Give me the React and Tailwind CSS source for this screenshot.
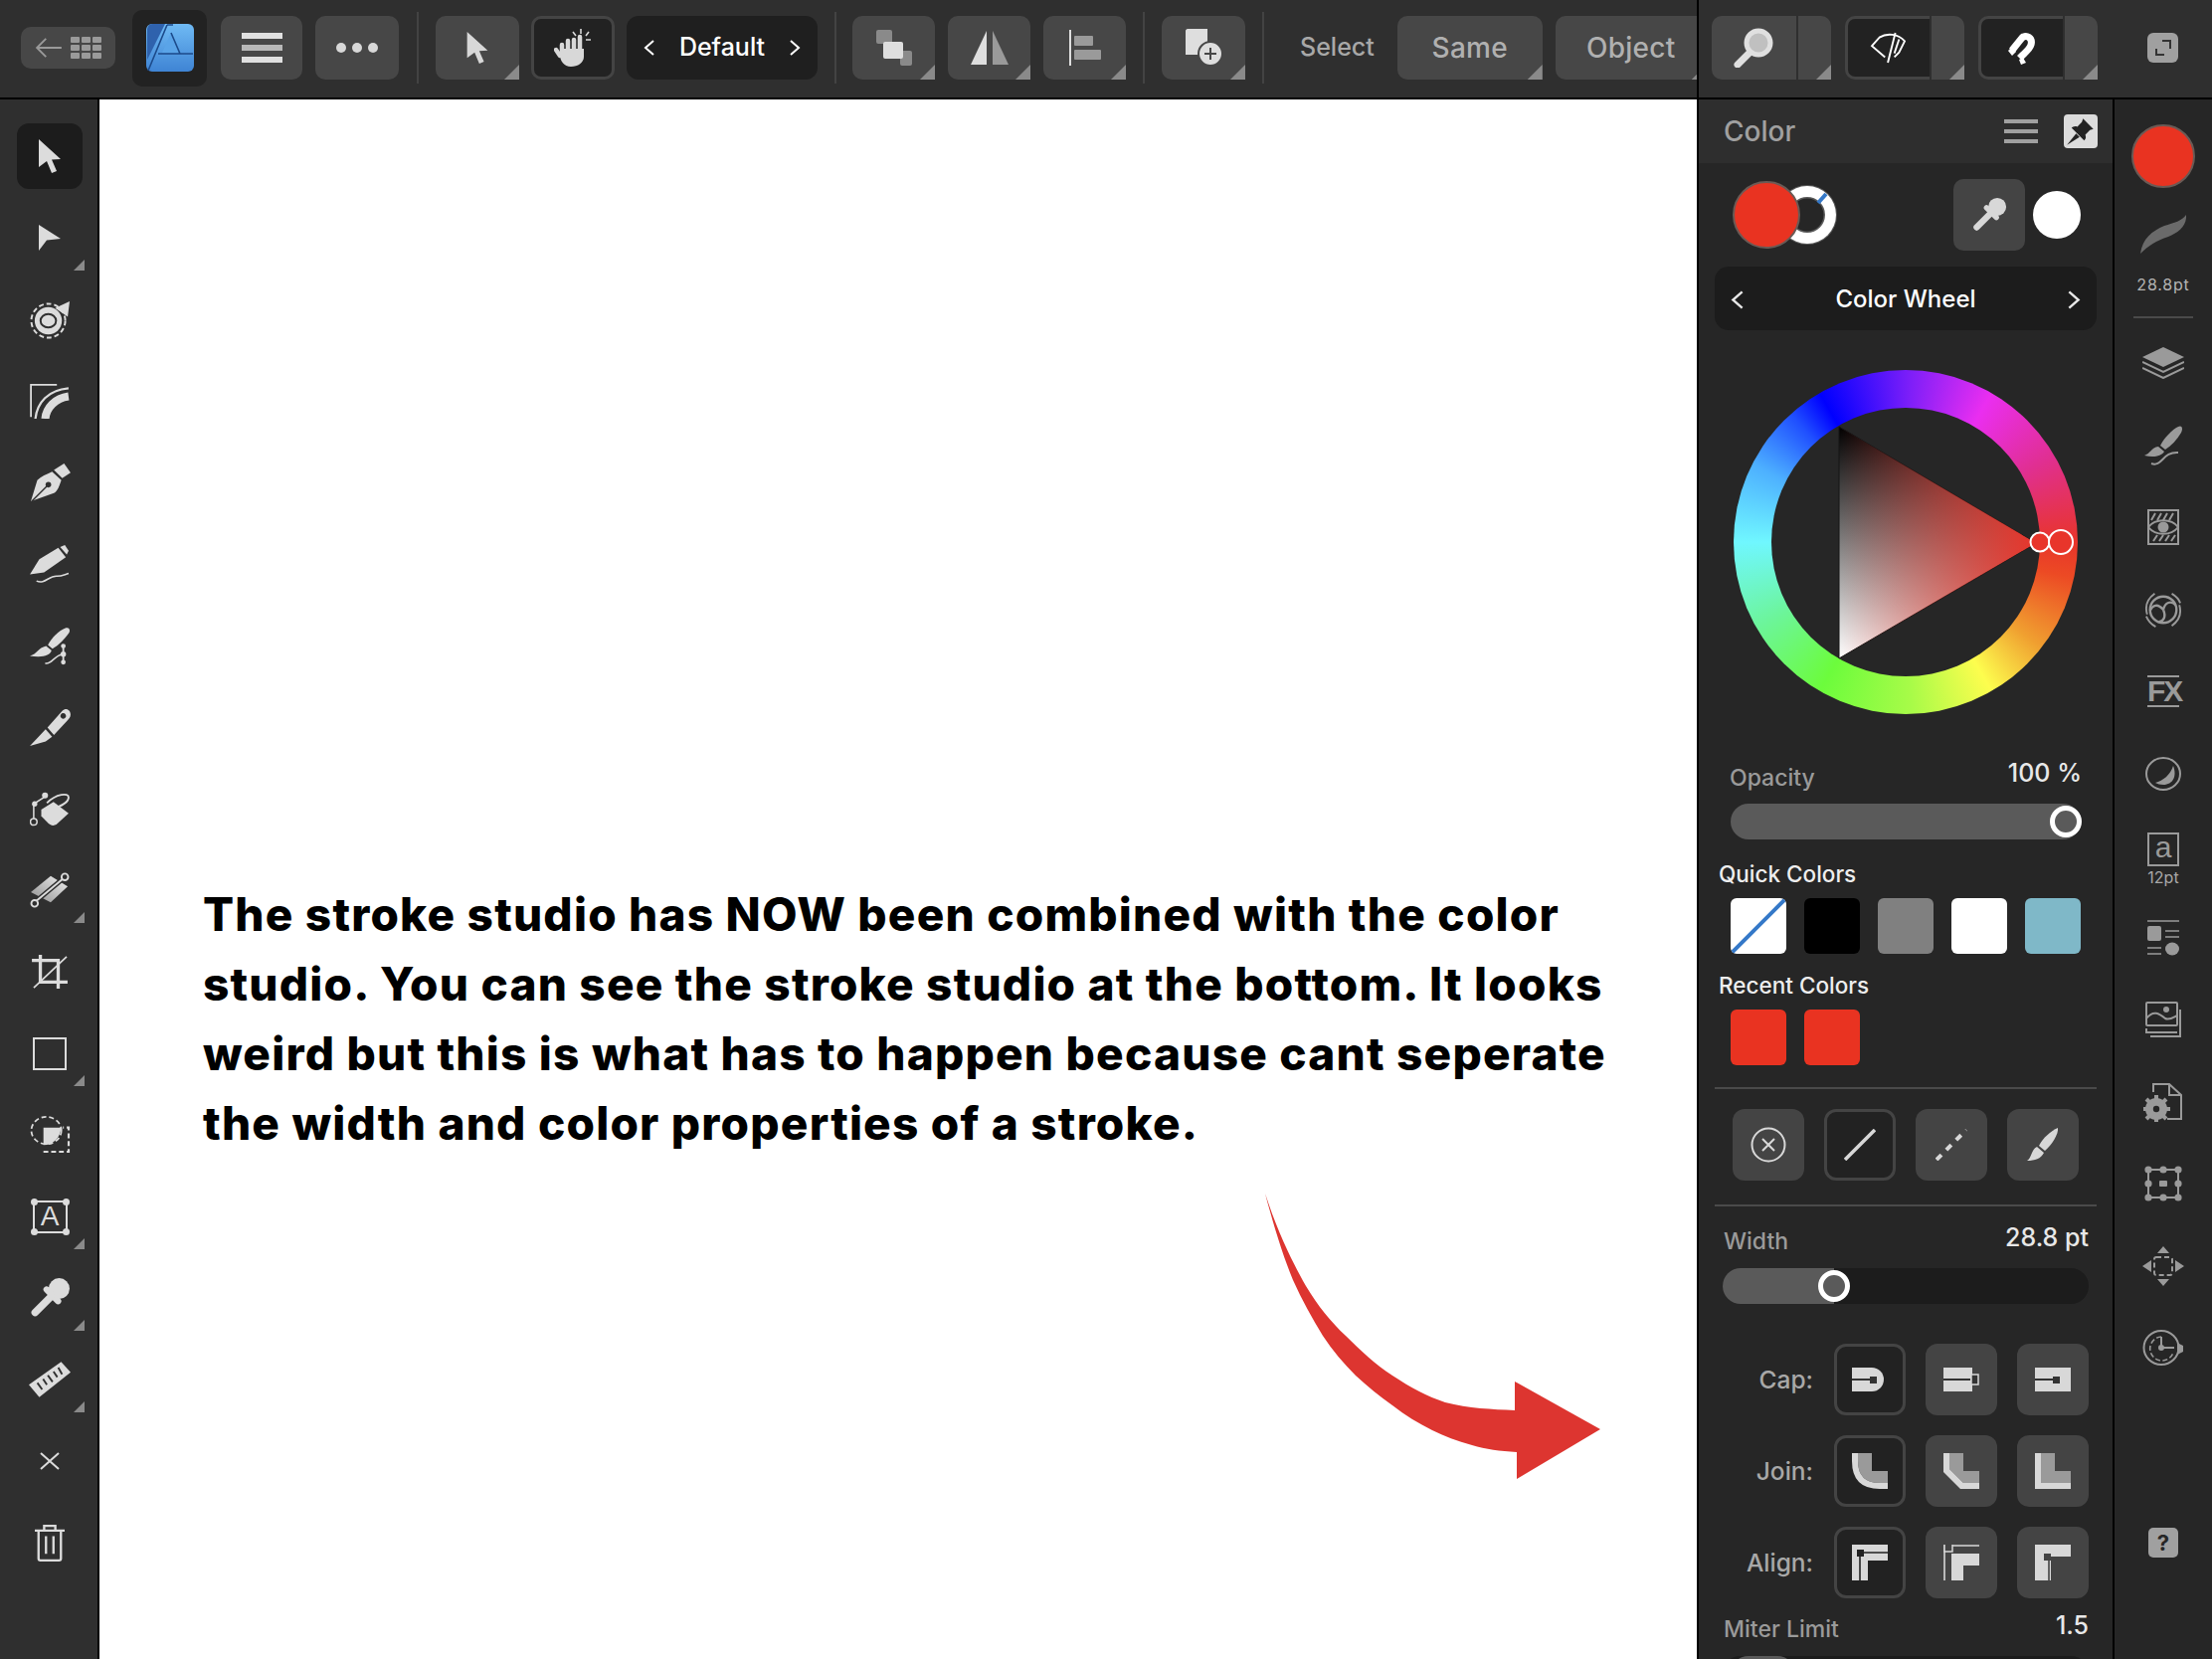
import React from "react";

const Corner = ({ size = "w-[15px] h-[15px]", className = "right-0 bottom-0" }) => (
  <span className={`absolute bg-[#8a8a8a] [clip-path:polygon(100%_0,100%_100%,0_100%)] ${size} ${className}`} />
);

const Btn = ({ className = "", corner, dark, children }) => (
  <div
    className={`relative shrink-0 h-16 flex items-center justify-center ${
      dark ? "bg-[#222222] border-[3px] border-[#444444]" : "bg-[#474747]"
    } ${corner ? "rounded-[10px] rounded-br-none" : "rounded-[10px]"} ${className}`}
  >
    {children}
    {corner && <Corner />}
  </div>
);

const Sep = ({ className = "" }) => <div className={`shrink-0 w-[2px] h-[72px] bg-[#434343] ${className}`} />;

const Split = ({ className = "", dark, children }) => (
  <div className={`flex shrink-0 gap-[2px] ${className}`}>
    <div className={`w-[85px] h-16 flex items-center justify-center rounded-l-[10px] ${dark ? "bg-[#222222] border-[3px] border-r-0 border-[#444444]" : "bg-[#474747]"}`}>
      {children}
    </div>
    <div className="relative w-[33px] h-16 bg-[#474747] rounded-r-[10px] rounded-br-none">
      <Corner />
    </div>
  </div>
);

const Arrow = ({ className = "" }) => (
  <svg viewBox="0 0 22 34" className={`fill-current ${className}`}>
    <path d="M0 0 L22 20 L13 20.5 L18 32 L13 34 L8 22 L0 28 Z" />
  </svg>
);

const Chevron = ({ dir, className = "w-3 h-4" }) => (
  <svg viewBox="0 0 12 16" className={`fill-none stroke-current stroke-2 ${className}`}>
    <path d={dir === "left" ? "M10 1 L2 8 L10 15" : "M2 1 L10 8 L2 15"} />
  </svg>
);

const Dropper = ({ className = "" }) => (
  <svg viewBox="0 0 40 40" className={`${className}`}>
    <circle cx="29" cy="11" r="10" fill="currentColor" />
    <path d="M17 12 L28 23" stroke="currentColor" strokeWidth="6" strokeLinecap="round" />
    <path d="M21 19 L6 34" stroke="currentColor" strokeWidth="7" strokeLinecap="round" />
  </svg>
);

// left tool bar icons
const icons = {
  move: <Arrow className="w-[22px] h-[34px]" />,
  node: (
    <svg viewBox="0 0 22 26" className="w-[22px] h-[26px] fill-current">
      <path d="M0 0 L22 14 L8 15.5 L0 26 Z" />
    </svg>
  ),
  contour: (
    <svg viewBox="0 0 42 40" className="w-[41px] h-[39px]">
      <circle cx="19" cy="21" r="17.5" fill="none" stroke="currentColor" strokeWidth="2" strokeDasharray="5 3" />
      <circle cx="19" cy="21" r="14" fill="currentColor" />
      <ellipse cx="19" cy="21" rx="8" ry="7" fill="none" stroke="#2f2f2f" strokeWidth="2" />
      <path d="M26 8 L41 1 L39 17 Z" fill="currentColor" />
    </svg>
  ),
  corner: (
    <svg viewBox="0 0 44 40" className="w-[40px] h-[36px] fill-none stroke-current">
      <path d="M1 38 V2 H30" strokeWidth="2" />
      <path d="M6 40 C8 22 20 8 43 6" strokeWidth="2.5" />
      <path d="M17 40 C18 28 28 17 43 15" strokeWidth="9" />
    </svg>
  ),
  pen: (
    <svg viewBox="0 0 44 42" className="w-[41px] h-[39px] fill-current">
      <path d="M26 7 L37 0 L44 10 L35 16 Z" />
      <path d="M24 9 L34 18 C32 24 30 30 26 32 L1 41 L8 18 C12 14 18 12 24 9 Z" />
      <path d="M2 41 L19 24" stroke="#2f2f2f" strokeWidth="1.5" />
      <circle cx="20" cy="23" r="3" fill="#2f2f2f" />
    </svg>
  ),
  pencil: (
    <svg viewBox="0 0 42 40" className="w-[40px] h-[38px] fill-current">
      <path d="M10 15 L30 3 L38 13 L15 29 L0 31 Z" />
      <path d="M32 2 L37 0 L41 6 L39 10 Z" />
      <path d="M7 38 C16 42 20 32 29 33 C34 33 37 31 41 30" fill="none" stroke="currentColor" strokeWidth="1.6" />
    </svg>
  ),
  vector: (
    <svg viewBox="0 0 44 42" className="w-[40px] h-[39px] fill-current">
      <path d="M20 20 C24 12 32 4 40 1 C44 0 45 4 43 7 C38 14 32 20 25 24 Z" />
      <path d="M18 21 L24 26 C22 32 14 34 0 32 C8 30 9 23 18 21 Z" />
      <path d="M17 40 C24 42 26 32 36 30" fill="none" stroke="currentColor" strokeWidth="1.6" />
      <path d="M37 20 V40" stroke="currentColor" strokeWidth="2" />
      <circle cx="37" cy="21" r="2.6" /><circle cx="37" cy="30" r="3" /><circle cx="37" cy="39" r="2.6" />
    </svg>
  ),
  knife: (
    <svg viewBox="0 0 44 42" className="w-[41px] h-[39px] fill-current">
      <path d="M0 41 L17 23 L24 31 L17 36 Z" />
      <path fillRule="evenodd" d="M19 21 L35 3 C39 -1 44 2 44 7 C44 10 42 12 40 14 L26 29 Z M36 5.5 a3 3 0 1 0 0.1 0 Z" />
    </svg>
  ),
  fill: (
    <svg viewBox="0 0 42 38" className="w-[40px] h-[36px]">
      <path d="M12 20 L25 12 L41 24 L28 36 C24 38 21 36 19 34 L12 27 Z" fill="currentColor" />
      <path d="M18 13 C28 3 41 2 41 7 C41 12 32 17 22 20" fill="none" stroke="currentColor" strokeWidth="2" />
      <path d="M4 32 V14 L15 7" fill="none" stroke="currentColor" strokeWidth="1.6" />
      <circle cx="4" cy="33" r="3.5" fill="#2f2f2f" stroke="currentColor" strokeWidth="1.6" />
      <circle cx="5" cy="14" r="2.8" fill="currentColor" />
      <circle cx="16" cy="5" r="3.2" fill="currentColor" />
    </svg>
  ),
  gradient: (
    <svg viewBox="0 0 42 40" className="w-[40px] h-[38px]">
      <defs>
        <linearGradient id="toolgrad" x1="0" y1="1" x2="1" y2="0">
          <stop offset="0" stopColor="#8f8f8f" />
          <stop offset="1" stopColor="#f0f0f0" />
        </linearGradient>
      </defs>
      <path d="M1 22 L22 5 L40 16 L22 33 Z" fill="url(#toolgrad)" />
      <path d="M5 33 L36 7" stroke="#2f2f2f" strokeWidth="5" />
      <path d="M5 33 L36 7" stroke="currentColor" strokeWidth="2" />
      <circle cx="5" cy="34" r="3.5" fill="#2f2f2f" stroke="currentColor" strokeWidth="2" />
      <circle cx="37" cy="6" r="3.5" fill="#2f2f2f" stroke="currentColor" strokeWidth="2" />
    </svg>
  ),
  crop: (
    <svg viewBox="0 0 38 36" className="w-[36px] h-[34px] fill-none stroke-current">
      <path d="M0 6 H28 V36 M9 0 V29 H38" strokeWidth="3.5" />
      <path d="M2 35 L37 2" strokeWidth="1.8" />
    </svg>
  ),
  rect: <div className="w-[34px] h-[33px] border-[2.5px] border-current" />,
  shape: (
    <svg viewBox="0 0 42 39" className="w-[41px] h-[38px]">
      <ellipse cx="17" cy="15" rx="15.5" ry="14" fill="none" stroke="currentColor" strokeWidth="1.8" strokeDasharray="5 3" />
      <path d="M14 12 H32 C32 22 24 30 14 30 Z" fill="currentColor" />
      <path d="M14 37 H40 V12 H34" fill="none" stroke="currentColor" strokeWidth="2.2" strokeDasharray="5 3" />
    </svg>
  ),
  text: (
    <div className="relative w-[35px] h-[33px] flex items-center justify-center border-2 border-current text-[28px] leading-none font-['Liberation_Sans',sans-serif]">
      A
      <span className="absolute -left-[4px] -top-[4px] w-[7px] h-[7px] rounded-full bg-current" />
      <span className="absolute -right-[4px] -top-[4px] w-[7px] h-[7px] rounded-full bg-current" />
      <span className="absolute -left-[4px] -bottom-[4px] w-[7px] h-[7px] rounded-full bg-current" />
      <span className="absolute -right-[4px] -bottom-[4px] w-[7px] h-[7px] rounded-full bg-current" />
    </div>
  ),
  dropper: <Dropper className="w-[42px] h-[42px]" />,
  ruler: (
    <svg viewBox="0 0 44 38" className="w-[42px] h-[37px] fill-current">
      <path d="M0 24 L34 0 L44 11 L11 37 Z" />
      <path d="M9 22 L14 29 M15 18 L19 24 M20 14 L25 21 M26 10 L30 16 M31 6 L35 13" stroke="#2f2f2f" strokeWidth="2" />
    </svg>
  ),
  close: (
    <svg viewBox="0 0 20 20" className="w-5 h-5 stroke-current fill-none stroke-2">
      <path d="M1 2 L19 18 M19 2 L1 18" />
    </svg>
  ),
  trash: (
    <svg viewBox="0 0 32 40" className="w-[30px] h-[40px] fill-none stroke-current">
      <path d="M0 7 H32 M10 7 V2 H22 V7 M4 7 V37 C4 38 5 39 6 39 H26 C27 39 28 38 28 37 V7 M12 13 V32 M20 13 V32" strokeWidth="2.5" />
    </svg>
  ),
};

const leftTools = [
  { id: "move", active: true },
  { id: "node", corner: true },
  { id: "contour" },
  { id: "corner" },
  { id: "pen" },
  { id: "pencil" },
  { id: "vector" },
  { id: "knife" },
  { id: "fill" },
  { id: "gradient", corner: true },
  { id: "crop" },
  { id: "rect", corner: true },
  { id: "shape" },
  { id: "text", corner: true },
  { id: "dropper", corner: true },
  { id: "ruler", corner: true },
  { id: "close" },
  { id: "trash" },
];

// right rail icons
const railIcons = [
  <svg key="layers" viewBox="0 0 42 32" className="w-[42px] h-[32px]">
    <path d="M21 0 L42 10 L21 20 L0 10 Z" fill="currentColor" />
    <path d="M0 15 L21 25 L42 15 M0 21 L21 31 L42 21" fill="none" stroke="currentColor" strokeWidth="2" />
  </svg>,
  <svg key="brush" viewBox="0 0 38 40" className="w-[38px] h-[40px] fill-current">
    <path d="M16 20 C20 12 28 4 34 1 C38 -1 39 3 37 7 C33 14 27 20 21 24 Z" />
    <path d="M14 21 L20 26 C17 31 9 32 0 30 C6 28 7 22 14 21 Z" />
    <path d="M7 38 C18 42 18 26 34 27" fill="none" stroke="currentColor" strokeWidth="2" />
  </svg>,
  <svg key="studio" viewBox="0 0 32 36" className="w-[32px] h-[36px]">
    <rect x="1" y="1" width="30" height="34" fill="none" stroke="currentColor" strokeWidth="2" />
    <path d="M4 11 L8 4 M10 11 L14 4 M16 11 L20 4 M22 11 L26 4 M6 32 L10 26 M12 32 L16 26 M18 32 L22 26 M24 32 L28 26" stroke="currentColor" strokeWidth="2" />
    <path d="M1 18 C8 9 24 9 31 18 C24 27 8 27 1 18 Z" fill="#262626" stroke="currentColor" strokeWidth="2" />
    <circle cx="16" cy="18" r="5.5" fill="currentColor" />
  </svg>,
  <svg key="aperture" viewBox="0 0 40 40" className="w-[40px] h-[38px] fill-none stroke-current stroke-2">
    <path d="M3 25 C0 15 4 8 11 3 M37 15 C40 25 36 32 29 37 M29 3 C34 6 37 10 38 13 M2 27 C4 32 8 36 12 38" />
    <circle cx="20" cy="20" r="14" strokeWidth="2.5" />
    <path d="M20 20 C14 13 9 15 6 21 M20 20 C22 12 28 10 33 15 M20 20 C23 27 21 32 15 33" strokeWidth="2.5" />
  </svg>,
  <div key="fx" className="w-[32px] border-y-2 border-current text-[30px] leading-[28px] font-black text-center tracking-[-2px] font-['Liberation_Sans',sans-serif]">
    FX
  </div>,
  <svg key="tone" viewBox="0 0 36 36" className="w-[36px] h-[36px]">
    <ellipse cx="18" cy="18" rx="17" ry="16" fill="none" stroke="currentColor" strokeWidth="2" />
    <path d="M10 27 C18 25 25 19 28 10 C32 20 28 29 18 29 C15 29 12 28 10 27 Z" fill="currentColor" />
  </svg>,
  <div key="char" className="flex flex-col items-center pt-[7px]">
    <div className="w-[32px] h-[34px] border-2 border-current flex items-center justify-center text-[30px] leading-none pb-[3px] font-['Liberation_Sans',sans-serif]">a</div>
    <span className="text-[16px] leading-[18px] mt-[2px] text-[#a8a8a8]">12pt</span>
  </div>,
  <svg key="paragraph" viewBox="0 0 32 36" className="w-[32px] h-[36px]">
    <path d="M0 1 H32 M18 11 H32 M18 17 H32 M0 28 H14 M0 34 H14" stroke="currentColor" strokeWidth="1.6" />
    <rect x="0" y="6" width="14" height="15" rx="2" fill="currentColor" />
    <ellipse cx="25" cy="29" rx="7" ry="6.5" fill="currentColor" />
  </svg>,
  <svg key="stock" viewBox="0 0 36 36" className="w-[36px] h-[36px] fill-none stroke-current stroke-2">
    <rect x="1" y="1" width="31" height="23" rx="1" />
    <path d="M1 17 C8 8 14 12 20 17 C24 19 28 16 32 14" />
    <circle cx="21" cy="8" r="3" fill="currentColor" stroke="none" />
    <path d="M1 27 V31 H32 M5 35 H35 V8" />
  </svg>,
  <svg key="settings" viewBox="0 0 40 40" className="w-[40px] h-[40px]">
    <path d="M10 10 V2 H26 L38 13 V37 H24 M26 2 V13 H38" fill="none" stroke="currentColor" strokeWidth="2" />
    <circle cx="13" cy="27" r="8" fill="none" stroke="currentColor" strokeWidth="6" />
    <path d="M13 13 V41 M-1 27 H27 M3 17 L23 37 M23 17 L3 37" stroke="currentColor" strokeWidth="4" />
    <circle cx="13" cy="27" r="3.2" fill="#262626" />
  </svg>,
  <svg key="transform" viewBox="0 0 38 36" className="w-[38px] h-[36px]">
    <rect x="4" y="4" width="30" height="28" fill="none" stroke="currentColor" strokeWidth="2" />
    {[[4, 4], [19, 4], [34, 4], [4, 18], [34, 18], [4, 32], [19, 32], [34, 32]].map(([x, y]) => (
      <circle key={`${x}-${y}`} cx={x} cy={y} r="3.6" fill="currentColor" />
    ))}
    <rect x="15" y="15" width="8" height="6" rx="1" fill="currentColor" />
  </svg>,
  <svg key="navigator" viewBox="0 0 42 40" className="w-[42px] h-[40px]">
    <rect x="12" y="11" width="18" height="18" rx="2" fill="none" stroke="currentColor" strokeWidth="2" strokeDasharray="5 3" />
    <path d="M21 0 L27 7 H15 Z M21 40 L27 33 H15 Z M0 20 L9 14 V26 Z M42 20 L33 14 V26 Z" fill="currentColor" />
  </svg>,
  <svg key="history" viewBox="0 0 42 38" className="w-[42px] h-[38px]">
    <path d="M35 14 L41 17 V23 L35 26 Z" fill="currentColor" />
    <ellipse cx="19" cy="19" rx="17.5" ry="17" fill="none" stroke="currentColor" strokeWidth="2" />
    <path d="M19 8 A12 12 0 1 0 31 24" fill="none" stroke="currentColor" strokeWidth="1.6" strokeDasharray="5 2.5" />
    <path d="M19 8 V19 H32" fill="none" stroke="currentColor" strokeWidth="2" />
    <circle cx="19" cy="19" r="3" fill="currentColor" />
  </svg>,
];

const PanelBtn = ({ active, children }) => (
  <div
    className={`w-[72px] h-[72px] shrink-0 rounded-[12px] flex items-center justify-center text-[#d8d8d8] ${
      active ? "bg-[#222222] border-[3px] border-[#444444]" : "bg-[#444444]"
    }`}
  >
    {children}
  </div>
);

const CapIcon = ({ type }) => (
  <svg viewBox="0 0 36 24" className="w-9 h-6">
    {type === "round" && <path d="M0 0 H20 A12 12 0 0 1 20 24 H0 Z" fill="currentColor" />}
    {type === "butt" && <rect width="29" height="24" fill="currentColor" />}
    {type === "square" && <rect width="36" height="24" fill="currentColor" />}
    <path d={type === "butt" ? "M0 12 H27" : "M0 12 H20"} stroke="#333333" strokeWidth="2" />
    {type === "butt" ? (
      <rect x="28" y="7" width="7" height="10" fill="#333333" stroke="currentColor" strokeWidth="1.5" />
    ) : (
      <rect x="18" y="9" width="7" height="7" fill="#333333" />
    )}
  </svg>
);

const JoinIcon = ({ band, fill }) => (
  <svg viewBox="0 0 36 36" className="w-9 h-9">
    <path d={fill} fill="#9a9a9a" />
    <path d={band} fill="currentColor" />
  </svg>
);

const AlignIcon = ({ type }) => (
  <svg viewBox="0 0 36 36" className="w-9 h-9">
    {type === "center" && (
      <>
        <path d="M0 0 H36 V16 H16 V36 H0 Z" fill="currentColor" />
        <path d="M8 36 V8 H36" fill="none" stroke="#222222" strokeWidth="1.6" />
        <rect x="5" y="5" width="7" height="7" fill="#222222" />
      </>
    )}
    {type === "outside" && (
      <>
        <path d="M6 36 V6 H36 V18 H18 V36 Z" fill="currentColor" transform="translate(2 3)" />
        <path d="M1 36 V1 H36" fill="none" stroke="currentColor" strokeWidth="1.6" />
        <rect x="1" y="-1" width="8" height="8" fill="#444444" stroke="currentColor" strokeWidth="1.5" />
      </>
    )}
    {type === "inside" && (
      <>
        <path d="M0 0 H36 V12 H16 V36 H0 Z" fill="currentColor" />
        <path d="M14 36 V14 H36" fill="none" stroke="#444444" strokeWidth="1.6" />
        <rect x="9" y="9" width="7" height="7" fill="#444444" />
      </>
    )}
  </svg>
);

const StrokeRow = ({ label, children }) => (
  <div className="flex items-center">
    <span className="w-[115px] text-right text-[24.5px] font-medium text-[#a8a8a8]">{label}</span>
    <div className="ml-[21px] flex gap-5">{children}</div>
  </div>
);

const ValueRow = ({ label, value, className = "" }) => (
  <div className={`flex justify-between items-start ${className}`}>
    <span className="leading-[30px] text-[23px] font-medium text-[#9a9a9a]">{label}</span>
    <span className="leading-[30px] text-[25px] font-medium text-[#e8e8e8]">{value}</span>
  </div>
);

const Swatch = ({ className = "", children }) => (
  <div className={`relative w-14 h-14 rounded-[6px] overflow-hidden ${className}`}>{children}</div>
);

const App = () => {
  return (
    <div className="w-[2224px] h-[1668px] overflow-hidden flex flex-col bg-black font-['Inter',sans-serif] select-none">
      {/* top bar */}
      <header className="flex h-[100px] shrink-0 border-b-2 border-black">
        <div className="w-[1706px] shrink-0 overflow-hidden flex items-center pb-[2px] pl-[21px] bg-[#2f2f2f] text-[#d8d8d8]">
          <div className="shrink-0 w-[95px] h-[42px] rounded-[10px] bg-[#474747] flex items-center justify-center gap-[8px] text-[#9a9a9a]">
            <svg viewBox="0 0 30 24" className="w-[28px] h-[22px] fill-none stroke-current stroke-2">
              <path d="M12 2 L2 12 L12 22 M2 12 H29" />
            </svg>
            <div className="grid grid-cols-3 gap-[2px]">
              {Array.from({ length: 9 }).map((_, i) => (
                <span key={i} className="w-[9px] h-[6px] rounded-[1px] bg-[#9a9a9a]" />
              ))}
            </div>
          </div>
          <div className="shrink-0 ml-[17px] w-[75px] h-[77px] rounded-[10px] bg-[#222222] flex items-center justify-center">
            <svg viewBox="0 0 48 48" className="w-12 h-12">
              <defs>
                <linearGradient id="appblue" x1="0" y1="0" x2="0" y2="1">
                  <stop offset="0" stopColor="#6fbaf4" />
                  <stop offset="1" stopColor="#3f84d4" />
                </linearGradient>
              </defs>
              <rect width="48" height="48" rx="6" fill="url(#appblue)" />
              <path d="M6 0 H19 L1 36 V6 C1 3 3 0 6 0 Z" fill="#2f62ad" />
              <path d="M25 9 L34 29 H16 Z" fill="#5aa4e8" />
              <path d="M2 47 L21 1 M21 1 H27 M25 9 L34 30 M12 30 H47" fill="none" stroke="#1c4a8a" strokeWidth="1.6" />
            </svg>
          </div>
          <Btn className="ml-[14px] w-[82px]">
            <div className="flex flex-col gap-[6px]">
              <span className="block w-[41px] h-[6px] bg-[#e0e0e0]" />
              <span className="block w-[41px] h-[6px] bg-[#b8b8b8]" />
              <span className="block w-[41px] h-[6px] bg-[#e0e0e0]" />
            </div>
          </Btn>
          <Btn className="ml-[13px] w-[84px]">
            <div className="flex gap-[6px]">
              <span className="w-[10px] h-[10px] rounded-full bg-[#d8d8d8]" />
              <span className="w-[10px] h-[10px] rounded-full bg-[#d8d8d8]" />
              <span className="w-[10px] h-[10px] rounded-full bg-[#d8d8d8]" />
            </div>
          </Btn>
          <Sep className="ml-[18px]" />
          <Btn corner className="ml-[17px] w-[84px]">
            <Arrow className="w-[22px] h-[32px]" />
          </Btn>
          <Btn dark className="ml-[12px] w-[84px]">
            <svg viewBox="0 0 38 38" className="w-[38px] h-[38px]">
              <path d="M8 16 V24 M14 12 V24 M20 11 V24" stroke="currentColor" strokeWidth="4.5" strokeLinecap="round" />
              <path d="M26 8 V22 M2 21 L6 27" stroke="currentColor" strokeWidth="4.5" strokeLinecap="round" />
              <path d="M6 20 H30 V28 C30 34 24 38 17 38 C10 38 6 32 6 26 Z" fill="currentColor" />
              <path d="M27 0 V5 M19 3 L22 7 M35 3 L32 7 M37 11 H32" stroke="currentColor" strokeWidth="1.6" />
            </svg>
          </Btn>
          <div className="shrink-0 ml-[12px] w-[192px] h-16 rounded-[12px] bg-[#1f1f1f] flex items-center justify-between px-[17px] text-white">
            <Chevron dir="left" />
            <span className="text-[25px] font-medium">Default</span>
            <Chevron dir="right" />
          </div>
          <Sep className="ml-[17px]" />
          <Btn corner className="ml-[16px] w-[83px]">
            <svg viewBox="0 0 36 36" className="w-9 h-9">
              <rect x="0" y="0" width="16" height="14" rx="2" fill="#8a8a8a" />
              <rect x="24" y="21" width="12" height="15" rx="2" fill="#8a8a8a" />
              <rect x="7" y="12" width="20" height="17" rx="2" fill="#dedede" />
            </svg>
          </Btn>
          <Btn corner className="ml-[13px] w-[83px]">
            <svg viewBox="0 0 38 34" className="w-[38px] h-[34px]">
              <path d="M0 34 L16 0 V34 Z" fill="#dedede" />
              <path d="M38 34 L22 0 V34 Z" fill="#9a9a9a" />
            </svg>
          </Btn>
          <Btn corner className="ml-[13px] w-[83px]">
            <svg viewBox="0 0 32 36" className="w-8 h-9">
              <rect x="0" y="0" width="2" height="36" fill="#dedede" />
              <rect x="5" y="6" width="19" height="10" rx="1" fill="#9a9a9a" />
              <rect x="5" y="20" width="27" height="10" rx="1" fill="#9a9a9a" />
            </svg>
          </Btn>
          <Sep className="ml-[17px]" />
          <Btn corner className="ml-[17px] w-[84px]">
            <svg viewBox="0 0 40 38" className="w-[40px] h-[38px]">
              <path d="M2 2 C2 1 3 0 4 0 H24 V18 H2 Z" fill="#dedede" />
              <path d="M2 18 H20 V26 H2 Z" fill="#dedede" />
              <circle cx="27" cy="25" r="12" fill="#dedede" stroke="#474747" strokeWidth="2" />
              <path d="M27 19 V31 M21 25 H33" stroke="#474747" strokeWidth="2" />
            </svg>
          </Btn>
          <Sep className="ml-[17px]" />
          <span className="ml-[36px] shrink-0 text-[25px] font-medium text-[#a8a8a8]">Select</span>
          <Btn corner className="ml-[23px] w-[146px] text-[#b0b0b0] text-[28px] tracking-[0.3px] font-medium">
            Same
          </Btn>
          <Btn corner className="ml-[13px] w-[152px] text-[#b0b0b0] text-[28px] tracking-[0.3px] font-medium">
            Object
          </Btn>
        </div>
        <div className="flex-1 flex items-center pb-[2px] border-l-2 border-black bg-[#2f2f2f] pl-[13px] text-[#d8d8d8]">
          <Split>
            <svg viewBox="0 0 42 40" className="w-[42px] h-[40px]">
              <circle cx="25" cy="15" r="12" fill="#c0c0c0" stroke="#e0e0e0" strokeWidth="5" />
              <path d="M16 25 L4 37" stroke="#e0e0e0" strokeWidth="7" strokeLinecap="round" />
            </svg>
          </Split>
          <Split dark className="ml-[14px]">
            <svg viewBox="0 0 40 34" className="w-[40px] h-[32px] fill-none stroke-white stroke-2">
              <path d="M16 27 L2 15 L10 6 C18 1 30 2 37 10 L31 22 L26 27" />
              <path d="M19 33 L27 1" />
              <path d="M31 8 L26 23" />
            </svg>
          </Split>
          <Split dark className="ml-[14px]">
            <svg viewBox="0 0 34 34" className="w-[34px] h-[34px]">
              <path d="M9 17 L17 7 C21 3 28 7 26 14 C25 18 20 22 17 25" fill="none" stroke="white" strokeWidth="7" strokeLinecap="square" />
              <path d="M3 20 L7 16 L11 21 L7 25 Z M14 29 L18 27 L21 32 L16 34 Z" fill="white" />
            </svg>
          </Split>
          <div className="ml-[50px] w-[31px] h-[30px] rounded-[6px] bg-[#a0a0a0] flex items-center justify-center">
            <svg viewBox="0 0 20 20" className="w-5 h-5 fill-none stroke-[#333333] stroke-2">
              <path d="M9 3 H17 V11 M3 11 V17 H11" />
            </svg>
          </div>
        </div>
      </header>

      <main className="flex-1 flex min-h-0">
        {/* left tools */}
        <aside className="w-[100px] shrink-0 border-r-2 border-black bg-[#2f2f2f] text-[#dcdcdc] pt-6 pl-[17px] flex flex-col gap-4">
          {leftTools.map((t) => (
            <div
              key={t.id}
              className={`relative shrink-0 w-[66px] h-[66px] flex items-center justify-center rounded-[12px] ${t.active ? "bg-[#1c1c1c]" : ""}`}
            >
              {icons[t.id]}
              {t.corner && <Corner size="w-[11px] h-[11px]" className="right-[-2px] bottom-0" />}
            </div>
          ))}
        </aside>

        {/* canvas */}
        <section className="flex-1 bg-white overflow-hidden pl-[104px] pt-[784px] text-black">
          <div className="text-[46px] leading-[70px] font-extrabold tracking-[1.2px] whitespace-nowrap font-['Inter',sans-serif]">
            <div>The stroke studio has NOW been combined with the color</div>
            <div>studio. You can see the stroke studio at the bottom. It looks</div>
            <div>weird but this is what has to happen because cant seperate</div>
            <div>the width and color properties of a stroke.</div>
          </div>
          <svg viewBox="0 0 400 320" className="block w-[400px] h-[320px] mt-[16px] ml-[1036px]">
            <path
              d="M32 20 C45 60 60 90 73 113 C85 133 98 149 113 163 C128 178 143 192 160 203 C178 215 195 224 213 230 C237 236 260 237 283 238 L283 209 L369 257 L285 307 L285 280 C268 279 254 277 240 273 C225 269 212 264 200 258 C186 251 173 243 160 233 C147 224 135 214 123 203 C111 191 100 178 90 163 C79 145 69 127 60 107 C50 83 40 50 32 20 Z"
              fill="#dd3530"
            />
          </svg>
        </section>

        {/* color studio */}
        <section className="w-[418px] shrink-0 border-l-2 border-black bg-[#262626] overflow-hidden flex flex-col">
          <div className="h-16 shrink-0 bg-[#2e2e2e] flex items-center justify-between pl-[25px] pr-[15px]">
            <span className="text-[28px] font-medium text-[#a0a0a0]">Color</span>
            <div className="flex items-center gap-[26px]">
              <div className="flex flex-col gap-[6px]">
                <span className="block w-[34px] h-[4px] bg-[#a0a0a0]" />
                <span className="block w-[34px] h-[4px] bg-[#a0a0a0]" />
                <span className="block w-[34px] h-[4px] bg-[#a0a0a0]" />
              </div>
              <div className="w-[34px] h-[34px] rounded-[4px] bg-[#dcdcdc] flex items-center justify-center">
                <svg viewBox="0 0 26 26" className="w-[30px] h-[30px] fill-[#222222]">
                  <path d="M15 2 L24 11 L21 12 L17 16 C18 19 17 20 16 21 L5 10 C6 9 8 8 10 9 L14 5 Z" />
                  <path d="M9 15 L12 18 L1 25 Z" />
                </svg>
              </div>
            </div>
          </div>

          <div className="mt-4 h-[72px] shrink-0 flex items-center pl-[34px] pr-[32px]">
            <div className="relative z-10 w-[68px] h-[68px] rounded-full bg-[#e93321] border-2 border-[#6b5a55]" />
            <svg viewBox="0 0 62 62" className="w-[62px] h-[62px] -ml-[24px]">
              <circle cx="31" cy="31" r="30" fill="#5a5a5a" />
              <circle cx="31" cy="31" r="29" fill="#ffffff" />
              <circle cx="31" cy="31" r="18" fill="#5a5a5a" />
              <circle cx="31" cy="31" r="16.5" fill="#262626" />
              <path d="M42 19 L50 10" stroke="#3478c8" strokeWidth="4" />
            </svg>
            <div className="ml-auto w-[72px] h-[72px] rounded-[10px] bg-[#444444] flex items-center justify-center text-[#d8d8d8]">
              <Dropper className="w-[36px] h-[36px]" />
            </div>
            <div className="ml-2 w-12 h-12 rounded-full bg-white" />
          </div>

          <div className="mt-4 mx-4 h-16 shrink-0 rounded-[14px] bg-[#1c1c1c] flex items-center justify-between px-[16px] pt-[2px] text-[#e8e8e8]">
            <Chevron dir="left" className="w-[14px] h-[19px]" />
            <span className="text-[24px] font-medium text-white">Color Wheel</span>
            <Chevron dir="right" className="w-[14px] h-[19px]" />
          </div>

          <div className="relative mt-10 mx-auto shrink-0 w-[346px] h-[346px] rounded-full flex items-center justify-center bg-[conic-gradient(from_90deg,#e8352b_0deg,#ec4a24_12deg,#f0a030_38deg,#fdfd4e_60deg,#a8fb48_88deg,#6cfc3c_120deg,#6cf59a_150deg,#70f7ff_180deg,#4db0ff_207deg,#2050ff_228deg,#0000ff_240deg,#7f1ff8_272deg,#ea2ef0_300deg,#e02f90_330deg,#e8352b_360deg)]">
            <div className="w-[270px] h-[270px] rounded-full bg-[#262626]" />
            <svg viewBox="0 0 346 346" className="absolute inset-0 w-[346px] h-[346px]">
              <defs>
                <linearGradient id="triBase" x1="0" y1="57" x2="0" y2="290" gradientUnits="userSpaceOnUse">
                  <stop offset="0" stopColor="#000000" />
                  <stop offset="1" stopColor="#ffffff" />
                </linearGradient>
                <linearGradient id="triHue" x1="106" y1="0" x2="304" y2="0" gradientUnits="userSpaceOnUse">
                  <stop offset="0" stopColor="#e8352b" stopOpacity="0" />
                  <stop offset="1" stopColor="#e8352b" stopOpacity="1" />
                </linearGradient>
              </defs>
              <path d="M106 57 L106 290 L304 174 Z" fill="url(#triBase)" stroke="#151515" strokeWidth="1" />
              <path d="M106 57 L106 290 L304 174 Z" fill="url(#triHue)" />
              <circle cx="308" cy="173" r="9.5" fill="#e8352b" stroke="#ffffff" strokeWidth="2" />
              <circle cx="329" cy="173" r="12" fill="#e8352b" stroke="#ffffff" strokeWidth="2" />
            </svg>
          </div>

          <ValueRow label="Opacity" value="100 %" className="mt-[44px] ml-[31px] mr-[31px] h-[35px] shrink-0 [&>span:first-child]:mt-[5px]" />
          <div className="relative mt-[11px] ml-8 w-[352px] h-9 shrink-0 rounded-full bg-[#5a5a5a]">
            <div className="absolute -right-[1px] top-[2px] w-8 h-8 rounded-full bg-[#5a5a5a] border-[5px] border-white" />
          </div>

          <div className="mt-5 ml-[20px] leading-[30px] text-[22.5px] font-medium text-[#eeeeee]">Quick Colors</div>
          <div className="mt-[9px] ml-8 flex gap-[18px] shrink-0">
            <Swatch className="bg-white">
              <svg viewBox="0 0 56 56" className="w-14 h-14">
                <path d="M0 56 L56 0" stroke="#3478c8" strokeWidth="4" />
              </svg>
            </Swatch>
            <Swatch className="bg-black" />
            <Swatch className="bg-[#808080]" />
            <Swatch className="bg-white" />
            <Swatch className="bg-[#7fb8c8]" />
          </div>
          <div className="mt-[17px] ml-[20px] leading-[30px] text-[22.5px] font-medium text-[#eeeeee]">Recent Colors</div>
          <div className="mt-[9px] ml-8 flex gap-[18px] shrink-0">
            <Swatch className="bg-[#e93321]" />
            <Swatch className="bg-[#e93321]" />
          </div>
          <div className="mt-[22px] mx-4 h-[2px] shrink-0 bg-[#4a4a4a]" />

          <div className="mt-5 ml-[34px] flex gap-5 shrink-0">
            <PanelBtn>
              <svg viewBox="0 0 36 36" className="w-9 h-9 fill-none stroke-current stroke-2">
                <circle cx="18" cy="18" r="16.5" />
                <path d="M12 12 L24 24 M24 12 L12 24" />
              </svg>
            </PanelBtn>
            <PanelBtn active>
              <svg viewBox="0 0 32 32" className="w-8 h-8 fill-none stroke-current stroke-[3.5]">
                <path d="M1 31 L31 1" />
              </svg>
            </PanelBtn>
            <PanelBtn>
              <svg viewBox="0 0 32 32" className="w-8 h-8 fill-none stroke-current stroke-[4]">
                <path d="M1 31 L31 1" strokeDasharray="7 7" />
              </svg>
            </PanelBtn>
            <PanelBtn>
              <svg viewBox="0 0 32 34" className="w-8 h-[34px] fill-current">
                <path d="M12 18 C16 10 24 3 31 0 C32 6 25 17 18 23 Z" />
                <path d="M10 19 L17 25 C14 31 8 33 0 33 C5 30 4 22 10 19 Z" />
              </svg>
            </PanelBtn>
          </div>
          <div className="mt-6 mx-4 h-[2px] shrink-0 bg-[#4a4a4a]" />

          <ValueRow label="Width" value="28.8 pt" className="mt-4 ml-[25px] mr-6 h-[34px] shrink-0 [&>span:first-child]:mt-[4px]" />
          <div className="relative mt-3 ml-6 w-[368px] h-9 shrink-0 rounded-full bg-[#1c1c1c]">
            <div className="h-9 w-[112px] rounded-l-full bg-[#5a5a5a]" />
            <div className="absolute left-[96px] top-[2px] w-8 h-8 rounded-full bg-[#5a5a5a] border-[5px] border-white" />
          </div>

          <div className="mt-10 flex flex-col gap-5 shrink-0">
            <StrokeRow label="Cap:">
              <PanelBtn active><CapIcon type="round" /></PanelBtn>
              <PanelBtn><CapIcon type="butt" /></PanelBtn>
              <PanelBtn><CapIcon type="square" /></PanelBtn>
            </StrokeRow>
            <StrokeRow label="Join:">
              <PanelBtn active>
                <JoinIcon fill="M6 0 H20 V18 H36 V30 H28 Q6 30 6 8 Z" band="M0 0 H6 V8 Q6 30 28 30 H36 V36 H28 Q0 36 0 8 Z" />
              </PanelBtn>
              <PanelBtn>
                <JoinIcon fill="M6 0 H20 V18 H36 V30 H20 L6 16 Z" band="M0 0 H6 V16 L20 30 H36 V36 H17 L0 19 Z" />
              </PanelBtn>
              <PanelBtn>
                <JoinIcon fill="M6 0 H20 V18 H36 V30 H6 Z" band="M0 0 H6 V30 H36 V36 H0 Z" />
              </PanelBtn>
            </StrokeRow>
            <StrokeRow label="Align:">
              <PanelBtn active><AlignIcon type="center" /></PanelBtn>
              <PanelBtn><AlignIcon type="outside" /></PanelBtn>
              <PanelBtn><AlignIcon type="inside" /></PanelBtn>
            </StrokeRow>
          </div>

          <ValueRow label="Miter Limit" value="1.5" className="mt-3 ml-[25px] mr-6 h-[34px] shrink-0 [&>span:first-child]:mt-[4px]" />
          <div className="mt-3 ml-6 w-[368px] h-9 shrink-0 rounded-full bg-[#1c1c1c]">
            <div className="ml-2 h-9 w-[65px] rounded-full bg-[#5a5a5a]" />
          </div>
        </section>

        {/* studio rail */}
        <aside className="w-[100px] shrink-0 border-l-2 border-black bg-[#262626] text-[#9a9a9a] flex flex-col items-center pt-[25px]">
          <div className="w-16 h-16 shrink-0 rounded-full bg-[#e93321] border-2 border-[#6b5a55]" />
          <svg viewBox="0 0 46 39" className="mt-[27px] w-[46px] h-[39px] shrink-0 fill-[#6a6a6a]">
            <path d="M0 39 C2 24 12 16 24 11 C34 8 42 6 46 0 C47 11 38 18 28 22 C16 26 8 31 0 39 Z" />
          </svg>
          <span className="mt-[20px] text-[16px] leading-[22px] tracking-[0.8px] text-[#b4b4b4]">28.8pt</span>
          <div className="mt-[21px] mb-1 w-[60px] h-[2px] shrink-0 bg-[#4a4a4a]" />
          {railIcons.map((icon, i) => (
            <div key={i} className="w-full h-[82.5px] shrink-0 flex items-center justify-center">
              {icon}
            </div>
          ))}
          <div className="mt-[139px] w-[30px] h-[30px] shrink-0 rounded-[5px] bg-[#a0a0a0] flex items-center justify-center text-[#262626] text-[22px] font-bold leading-none">
            ?
          </div>
        </aside>
      </main>
    </div>
  );
};

export default App;
